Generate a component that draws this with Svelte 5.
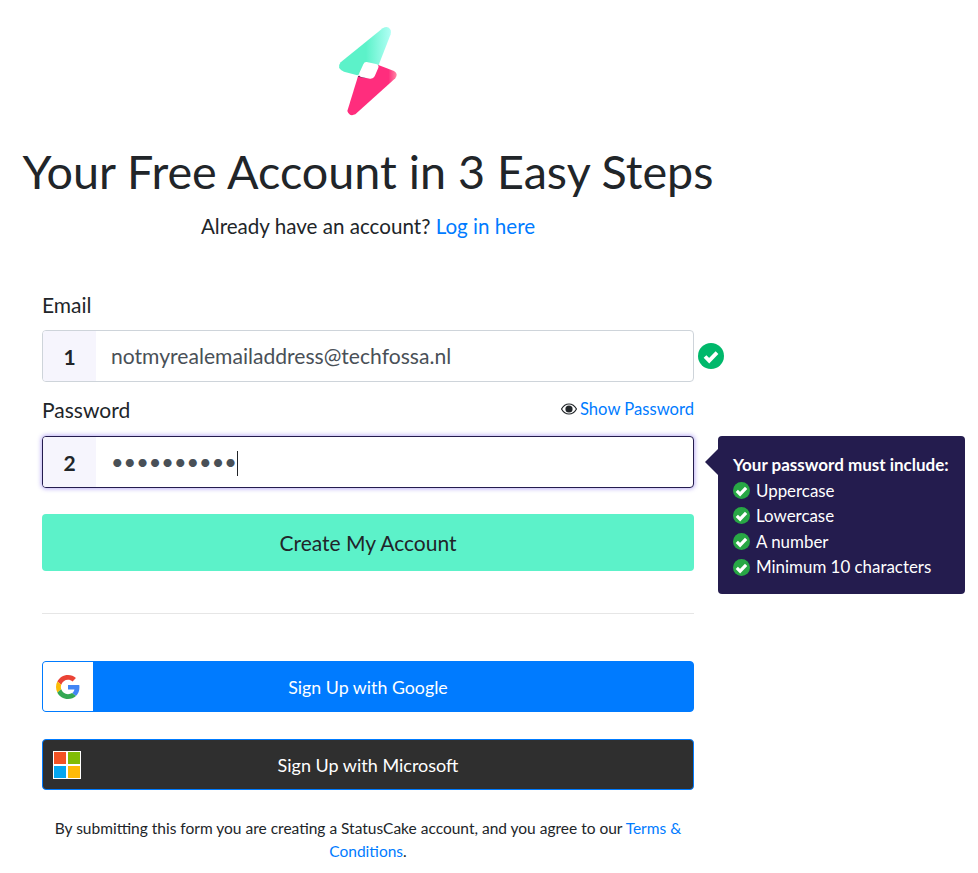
<script>
  let email = 'notmyrealemailaddress@techfossa.nl'
  let password = 'abcdefghij'
  const rules = ['Uppercase', 'Lowercase', 'A number', 'Minimum 10 characters']
</script>

<main class="page">
  <div class="logo">
    <svg width="100" height="110" viewBox="0 0 300 330" aria-label="Logo">
      <defs>
        <linearGradient id="teal" x1="60" y1="0" x2="215" y2="0" gradientUnits="userSpaceOnUse">
          <stop offset="0.5" stop-color="#5cf2c9" />
          <stop offset="1" stop-color="#b4fff6" />
        </linearGradient>
        <linearGradient id="pink" x1="85" y1="0" x2="232" y2="0" gradientUnits="userSpaceOnUse">
          <stop offset="0.82" stop-color="#ff2d7d" />
          <stop offset="1" stop-color="#ff8fa8" />
        </linearGradient>
      </defs>
      <path d="M188 40 Q205 30 212 45 Q214 52 212 58 L176 150 L112 181 L72 170 Q48 160 62 142 Z" fill="url(#teal)" />
      <path d="M114 184 L175 150 L222 168 Q236 176 226 190 L106 298 Q88 306 82 288 Z" fill="url(#pink)" />
      <path d="M114 184 L136 188" stroke="#241c4e" stroke-width="2" />
      <path d="M140 141 L168 147 Q178 150 175 158 L164 184 Q160 192 150 191 L124 186 Q115 183 118 174 L130 148 Q133 140 140 141 Z" fill="#fff" />
    </svg>
  </div>

  <h1>Your Free Account in 3 Easy Steps</h1>
  <p class="login">Already have an account? <a href="#login">Log in here</a></p>

  <form on:submit|preventDefault>
    <label for="email">Email</label>
    <div class="group">
      <span class="step">1</span>
      <input id="email" type="text" bind:value={email} />
      <svg class="valid" width="26" height="26" viewBox="0 0 26 26">
        <circle cx="13" cy="13" r="13" fill="#00b86b" />
        <path d="M7 13.500l4.200 4.200 7.800-8" fill="none" stroke="#fff" stroke-width="3.800" />
      </svg>
    </div>

    <div class="label-row">
      <label for="password">Password</label>
      <a class="show" href="#show">
        <svg width="16" height="12" viewBox="0 0 16 12">
          <path d="M.5 6C2.3 2.8 5 1 8 1s5.700 1.800 7.500 5C13.700 9.200 11 11 8 11S2.300 9.200.5 6z" fill="none" stroke="#212529" stroke-width="1.200" />
          <circle cx="8" cy="6" r="3.600" fill="#212529" />
        </svg>
        Show Password
      </a>
    </div>
    <div class="group focused">
      <span class="step">2</span>
      <input id="password" type="password" bind:value={password} />
      <span class="caret"></span>
      <div class="tooltip">
        <strong>Your password must include:</strong>
        <ul>
          {#each rules as rule}
            <li>
              <svg width="17" height="17" viewBox="0 0 17 17">
                <circle cx="8.500" cy="8.500" r="8.500" fill="#28a745" />
                <path d="M3.800 8.800l3.300 3.300 6-6.300" fill="none" stroke="#fff" stroke-width="3.200" />
              </svg>
              {rule}
            </li>
          {/each}
        </ul>
      </div>
    </div>

    <button class="submit" type="submit">Create My Account</button>
  </form>

  <hr />

  <button class="social google">
    <span class="badge">
      <svg width="24" height="24" viewBox="0 0 48 48">
        <path fill="#ea4335" d="M24 9.500c3.500 0 6.700 1.300 9.100 3.500l6.800-6.800C35.800 2.400 30.200 0 24 0 14.600 0 6.500 5.400 2.600 13.200l7.900 6.200C12.400 13.700 17.700 9.500 24 9.500z" />
        <path fill="#4285f4" d="M46.900 24.500c0-1.600-.1-3.100-.4-4.500H24v9h12.900c-.6 3-2.200 5.500-4.700 7.200l7.700 6c4.500-4.200 7-10.300 7-17.700z" />
        <path fill="#fbbc05" d="M10.500 28.600c-.5-1.400-.8-3-.8-4.600s.3-3.200.8-4.600l-7.900-6.200C.9 16.500 0 20.100 0 24s.9 7.500 2.600 10.800l7.900-6.200z" />
        <path fill="#34a853" d="M24 48c6.500 0 11.900-2.100 15.900-5.800l-7.700-6c-2.200 1.500-5 2.300-8.200 2.300-6.300 0-11.600-4.200-13.500-9.900l-7.900 6.200C6.500 42.600 14.600 48 24 48z" />
      </svg>
    </span>
    <span class="social-label">Sign Up with Google</span>
  </button>

  <button class="social microsoft">
    <span class="ms-logo">
      <i style="background:#f35325"></i><i style="background:#81bc06"></i>
      <i style="background:#05a6f0"></i><i style="background:#ffba08"></i>
    </span>
    <span class="social-label">Sign Up with Microsoft</span>
  </button>

  <p class="terms">
    By submitting this form you are creating a StatusCake account, and you agree to our <a href="#terms">Terms &amp; Conditions</a>.
  </p>
</main>

<style>
  :global(body) {
    background: #fff;
    color: #212529;
    font-family: Lato, sans-serif;
  }
  .page {
    box-sizing: border-box;
    width: 736px;
    padding: 27px 42px 0;
    font-size: 21px;
  }
  a {
    color: #007bff;
    text-decoration: none;
  }
  .logo {
    display: flex;
    justify-content: center;
    height: 90px;
    margin-top: -12px;
    padding-left: 4px;
  }
  h1 {
    margin: 39px -20px 0;
    font-size: 46.700px;
    font-weight: 400;
    line-height: 54px;
    text-align: center;
    white-space: nowrap;
  }
  .login {
    margin: 13px 0 0;
    font-size: 20.600px;
    line-height: 30px;
    text-align: center;
  }
  form {
    margin-top: 49px;
  }
  label {
    display: block;
    line-height: 30px;
  }
  .group {
    position: relative;
    display: flex;
    height: 52px;
    margin-top: 10px;
    box-sizing: border-box;
    border: 1px solid #ced4da;
    border-radius: 4px;
    background: #fff;
  }
  .group.focused {
    margin-top: 11px;
    border-color: #241c4e;
    box-shadow: 0 0 4px 1px rgba(90, 60, 230, 0.4);
  }
  .step {
    width: 53px;
    display: flex;
    align-items: center;
    justify-content: center;
    background: #f6f5fd;
    border-radius: 3px 0 0 3px;
    font-weight: 700;
  }
  input {
    flex: 1;
    min-width: 0;
    border: 0;
    outline: 0;
    background: transparent;
    padding: 0 16px 2px 15px;
    color: #495057;
    font: 21.100px Lato, sans-serif;
  }
  input[type='password'] {
    padding-bottom: 0;
    font-size: 21.700px;
  }
  .valid {
    position: absolute;
    left: 655px;
    top: 12px;
  }
  .caret {
    position: absolute;
    left: 194px;
    top: 14px;
    width: 1px;
    height: 25px;
    background: #212529;
  }
  .label-row {
    display: flex;
    justify-content: space-between;
    align-items: center;
    margin-top: 13px;
    height: 30px;
  }
  .show {
    display: flex;
    align-items: center;
    gap: 3px;
    margin-bottom: 3px;
    font-size: 16.600px;
  }
  .tooltip {
    position: absolute;
    left: 675px;
    top: -1px;
    box-sizing: border-box;
    width: 247px;
    height: 158px;
    padding: 16px 15px;
    border-radius: 4px;
    background: #241c4e;
    color: #fff;
    font-size: 16.900px;
    line-height: 25.600px;
  }
  .tooltip::before {
    content: '';
    position: absolute;
    left: -13px;
    top: 13px;
    border: 13px solid transparent;
    border-left: 0;
    border-right-color: #241c4e;
  }
  .tooltip strong {
    display: block;
    font-size: 17px;
    white-space: nowrap;
  }
  ul {
    margin: 0;
    padding: 0;
    list-style: none;
  }
  li {
    display: flex;
    align-items: center;
    gap: 6px;
    white-space: nowrap;
  }
  .submit {
    display: block;
    width: 100%;
    height: 57px;
    margin-top: 26px;
    border: 0;
    border-radius: 4px;
    background: #5cf2c9;
    color: #212529;
    font: 21px Lato, sans-serif;
  }
  hr {
    margin: 42px 0 47px;
    border: 0;
    border-top: 1px solid #e6e6e6;
  }
  .social {
    display: flex;
    align-items: center;
    width: 100%;
    height: 51px;
    padding: 0;
    border: 1px solid #007bff;
    border-radius: 4px;
    color: #fff;
    font: 17.800px Lato, sans-serif;
  }
  .social-label {
    flex: 1;
    text-align: center;
  }
  .google {
    background: #007bff;
  }
  .badge {
    width: 50px;
    height: 49px;
    display: flex;
    align-items: center;
    justify-content: center;
    margin-right: -50px;
    background: #fff;
    border-radius: 3px 0 0 3px;
  }
  .microsoft {
    margin-top: 27px;
    background: #2f2f2f;
    font-size: 18px;
  }
  .ms-logo {
    display: grid;
    grid-template-columns: 12px 12px;
    grid-auto-rows: 12px;
    gap: 2px;
    padding: 1px;
    margin: 0 -38px 0 10px;
    background: #fff;
  }
  .ms-logo i {
    display: block;
  }
  .terms {
    margin: 27px 0 0;
    font-size: 15.500px;
    line-height: 23px;
    text-align: center;
  }
</style>
